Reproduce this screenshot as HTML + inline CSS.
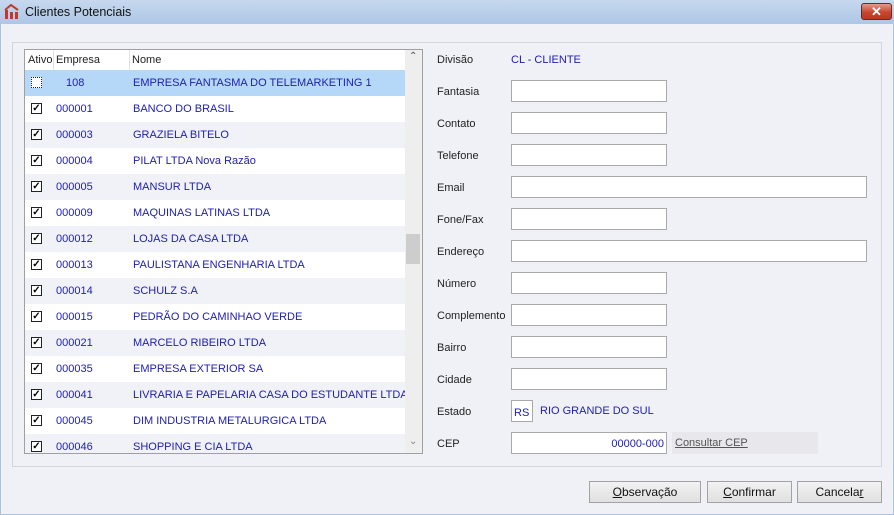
<!DOCTYPE html>
<html><head><style>
*{margin:0;padding:0;box-sizing:border-box}
body{width:894px;height:515px;overflow:hidden;background:#f0f1f7;font-family:"Liberation Sans",sans-serif;font-size:11px;color:#222;position:relative;white-space:nowrap}
.tb{position:absolute;left:0;top:0;width:894px;height:24px;background:linear-gradient(#c6d8ee,#aec7e6);}
.tb .t{position:absolute;left:25px;top:5px;font-size:12.5px;color:#111}
.win{position:absolute;left:0;top:24px;width:894px;height:491px;border:1px solid #a9c3e2;border-top:none;background:#f0f1f7}
.x{position:absolute;left:861px;top:3px;width:31px;height:17px;border:1px solid #6b2a2a;border-radius:3px;background:linear-gradient(#e3998c,#c9452f 55%,#b8391f);color:#fff;font-weight:bold;font-size:13px;text-align:center;line-height:15px}
.grp{position:absolute;left:12px;top:42px;width:870px;height:425px;border:1px solid #d6d6da}
.list{position:absolute;left:24px;top:49px;width:399px;height:405px;border:1px solid #a0a0a0;background:#fff;overflow:hidden}
.hd{position:absolute;left:0;top:0;height:20px;width:380px;background:#fff}
.hd span{position:absolute;top:4px}
.hd i{position:absolute;top:0;width:1px;height:20px;background:#e3e3e3}
.row{position:absolute;left:0;width:380px;height:26px;color:#2020b0}
.row .c{position:absolute;left:6px;top:7px;width:11px;height:11px;border:1px solid #222;background:#fff;font-size:10px;line-height:9px;text-align:center;color:#000;font-weight:bold}
.row .e{position:absolute;left:31px;top:7px}
.row .n{position:absolute;left:108px;top:7px}
.sb{position:absolute;left:380px;top:0;width:17px;height:403px;background:#eeeeee}
.th{position:absolute;left:381px;top:184px;width:14px;height:30px;background:#cdcdcd}
.lb{position:absolute;left:437px}
.in{position:absolute;left:511px;width:156px;height:22px;border:1px solid #a9a9a9;background:#fff}
.btn{position:absolute;top:481px;height:22px;border:1px solid #a3a3a3;background:linear-gradient(#f2f2f2,#e0e0e0);text-align:center;line-height:20px;font-size:12px;color:#111}
u{text-decoration:underline}
</style></head><body>
<div class="win"></div>
<div class="tb"><svg style="position:absolute;left:4px;top:4px" width="15" height="16" viewBox="0 0 15 16"><path d="M1 6 L7 1 L14 6" stroke="#c0392b" stroke-width="2" fill="none"/><rect x="1" y="6" width="3" height="9" fill="#c0392b"/><rect x="6" y="8" width="3" height="7" fill="#c0392b"/><rect x="11" y="8" width="3" height="7" fill="#c0392b"/></svg><span class="t">Clientes Potenciais</span><div class="x">✕</div></div>
<div class="grp"></div>
<div class="list">
<div class="hd"><span style="left:3px">Ativo</span><i style="left:28px"></i><span style="left:31px">Empresa</span><i style="left:104px"></i><span style="left:107px">Nome</span></div>
<div class="row" style="top:20px;background:#b5d8f8"><div class="c" style="border-style:dotted"></div><span class="e" style="left:41px">108</span><span class="n">EMPRESA FANTASMA DO TELEMARKETING 1</span></div>
<div class="row" style="top:46px;background:#fff"><div class="c">✓</div><span class="e">000001</span><span class="n">BANCO DO BRASIL</span></div>
<div class="row" style="top:72px;background:#f1f2f8"><div class="c">✓</div><span class="e">000003</span><span class="n">GRAZIELA BITELO</span></div>
<div class="row" style="top:98px;background:#fff"><div class="c">✓</div><span class="e">000004</span><span class="n">PILAT LTDA Nova Razão</span></div>
<div class="row" style="top:124px;background:#f1f2f8"><div class="c">✓</div><span class="e">000005</span><span class="n">MANSUR LTDA</span></div>
<div class="row" style="top:150px;background:#fff"><div class="c">✓</div><span class="e">000009</span><span class="n">MAQUINAS LATINAS LTDA</span></div>
<div class="row" style="top:176px;background:#f1f2f8"><div class="c">✓</div><span class="e">000012</span><span class="n">LOJAS DA CASA LTDA</span></div>
<div class="row" style="top:202px;background:#fff"><div class="c">✓</div><span class="e">000013</span><span class="n">PAULISTANA ENGENHARIA LTDA</span></div>
<div class="row" style="top:228px;background:#f1f2f8"><div class="c">✓</div><span class="e">000014</span><span class="n">SCHULZ S.A</span></div>
<div class="row" style="top:254px;background:#fff"><div class="c">✓</div><span class="e">000015</span><span class="n">PEDRÃO DO CAMINHAO VERDE</span></div>
<div class="row" style="top:280px;background:#f1f2f8"><div class="c">✓</div><span class="e">000021</span><span class="n">MARCELO RIBEIRO LTDA</span></div>
<div class="row" style="top:306px;background:#fff"><div class="c">✓</div><span class="e">000035</span><span class="n">EMPRESA EXTERIOR SA</span></div>
<div class="row" style="top:332px;background:#f1f2f8"><div class="c">✓</div><span class="e">000041</span><span class="n">LIVRARIA E PAPELARIA CASA DO ESTUDANTE LTDA</span></div>
<div class="row" style="top:358px;background:#fff"><div class="c">✓</div><span class="e">000045</span><span class="n">DIM INDUSTRIA METALURGICA LTDA</span></div>
<div class="row" style="top:384px;background:#f1f2f8"><div class="c">✓</div><span class="e">000046</span><span class="n">SHOPPING E CIA  LTDA</span></div>
<div class="sb"><span style="position:absolute;left:4px;top:1px;font-size:10px;color:#555">⌃</span><span style="position:absolute;left:4px;top:386px;font-size:10px;color:#888">⌄</span></div>
<div class="th"></div>
</div>
<span class="lb" style="top:54px">Divisão</span><span style="position:absolute;left:511px;top:54px;color:#2020b0">CL - CLIENTE</span>
<span class="lb" style="top:86px">Fantasia</span><div class="in" style="top:80px"></div>
<span class="lb" style="top:118px">Contato</span><div class="in" style="top:112px"></div>
<span class="lb" style="top:150px">Telefone</span><div class="in" style="top:144px"></div>
<span class="lb" style="top:182px">Email</span><div class="in" style="top:176px;width:356px"></div>
<span class="lb" style="top:214px">Fone/Fax</span><div class="in" style="top:208px"></div>
<span class="lb" style="top:246px">Endereço</span><div class="in" style="top:240px;width:356px"></div>
<span class="lb" style="top:278px">Número</span><div class="in" style="top:272px"></div>
<span class="lb" style="top:310px">Complemento</span><div class="in" style="top:304px"></div>
<span class="lb" style="top:342px">Bairro</span><div class="in" style="top:336px"></div>
<span class="lb" style="top:374px">Cidade</span><div class="in" style="top:368px"></div>
<span class="lb" style="top:406px">Estado</span><div class="in" style="top:400px;width:22px;color:#2020b0;padding:6px 0 0 2px">RS</div><span style="position:absolute;left:540px;top:405px;color:#2020b0">RIO GRANDE DO SUL</span>
<span class="lb" style="top:438px">CEP</span><div class="in" style="top:432px;color:#2020b0;text-align:right;padding:5px 2px 0 0">00000-000</div>
<div style="position:absolute;left:672px;top:432px;width:146px;height:22px;background:#e8e8ec"><span style="position:absolute;left:3px;top:5px;color:#555;text-decoration:underline">Consultar CEP</span></div>
<div class="btn" style="left:589px;width:112px"><u>O</u>bservação</div>
<div class="btn" style="left:707px;width:85px"><u>C</u>onfirmar</div>
<div class="btn" style="left:797px;width:85px">Cancela<u>r</u></div>
</body></html>
